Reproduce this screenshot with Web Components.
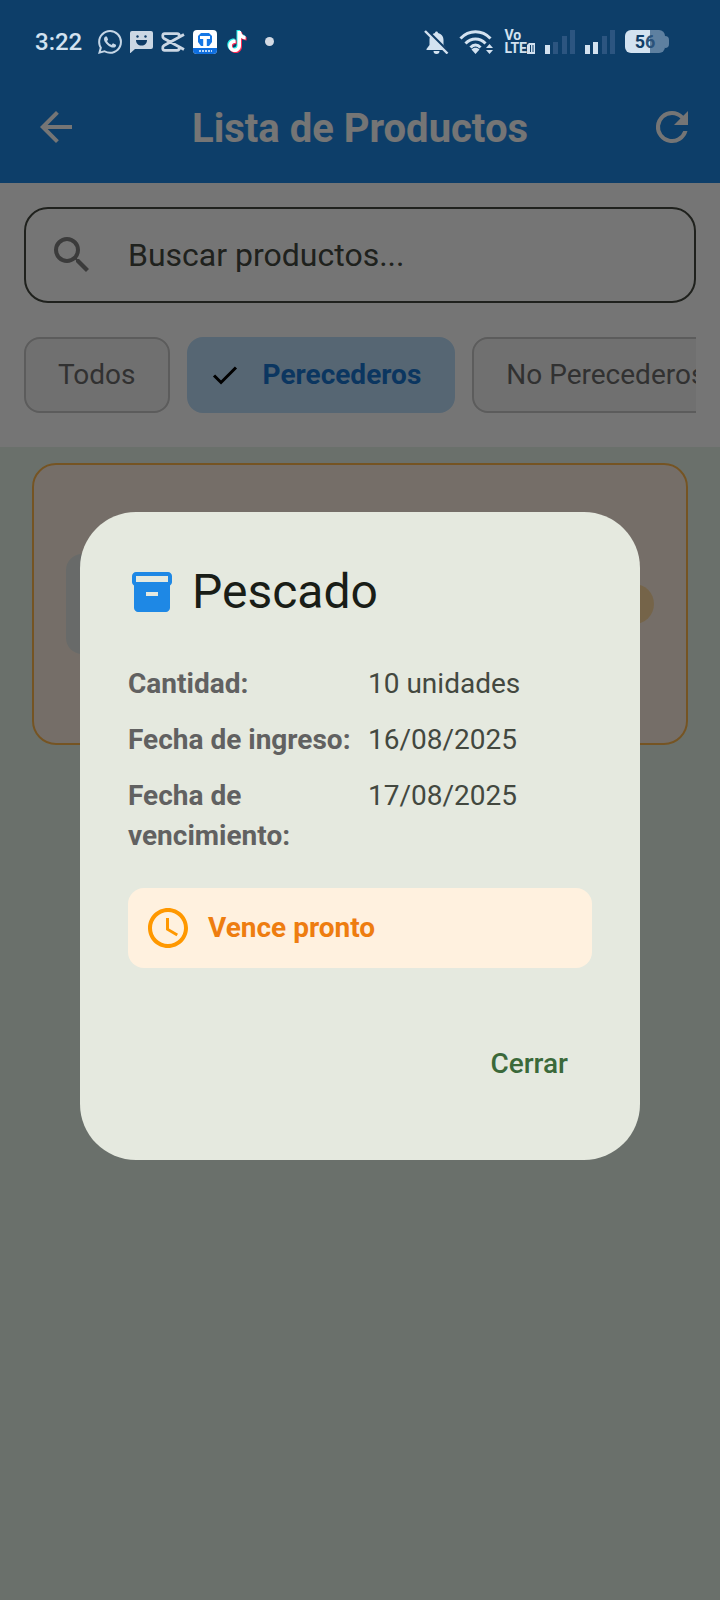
<!DOCTYPE html>
<html lang="es">
<head>
<meta charset="utf-8">
<meta name="viewport" content="width=device-width, initial-scale=1">
<title>Lista de Productos</title>
<style>
  html, body { margin: 0; height: 100%; }
  body { font-family: Roboto, "Liberation Sans", sans-serif; background: #e8f5e9; }
</style>
</head>
<body>
<app-shell>
  <product-screen slot="screen"></product-screen>
  <product-dialog slot="dialog" heading="Pescado">
    <detail-row label="Cantidad:">10 unidades</detail-row>
    <detail-row label="Fecha de ingreso:">16/08/2025</detail-row>
    <detail-row label="Fecha de vencimiento:">17/08/2025</detail-row>
    <expiry-banner slot="banner">Vence pronto</expiry-banner>
  </product-dialog>
  <status-bar slot="status"></status-bar>
</app-shell>

<script>
const define = (name, html, setup) => {
  const template = document.createElement('template');
  template.innerHTML = html;
  customElements.define(name, class extends HTMLElement {
    constructor() {
      super();
      this.attachShadow({ mode: 'open' }).append(template.content.cloneNode(true));
    }
    connectedCallback() { if (setup) setup(this, this.shadowRoot); }
  });
};

/* ---------- icons ---------- */
const ICONS = {
  back: '<path d="M20 11H7.83l5.59-5.59L12 4l-8 8 8 8 1.41-1.41L7.83 13H20v-2z"/>',
  refresh: '<path d="M17.65 6.35A7.95 7.95 0 0 0 12 4a8 8 0 1 0 7.73 10h-2.08A6 6 0 1 1 12 6c1.66 0 3.14.69 4.22 1.78L13 11h7V4l-2.35 2.35z"/>',
  search: '<path d="M15.5 14h-.79l-.28-.27A6.47 6.47 0 0 0 16 9.5 6.5 6.5 0 1 0 9.5 16c1.61 0 3.09-.59 4.23-1.57l.27.28v.79l5 4.99L20.49 19l-4.99-5zm-6 0a4.5 4.5 0 1 1 0-9 4.5 4.5 0 0 1 0 9z"/>',
  check: '<path d="M2.600 12.400l6 6L21.400 5.600" fill="none" stroke="currentColor" stroke-width="2.600"/>',
  archive: '<path fill-rule="evenodd" d="M20 2H4c-1 0-2 .9-2 2v3.01c0 .72.43 1.34 1 1.69V20c0 1.1 1.1 2 2 2h14c.9 0 2-.9 2-2V8.7c.57-.35 1-.97 1-1.69V4c0-1.100-1-2-2-2zm-5 12H9v-2h6v2zm5-7H4V4h16v3z"/>',
  clock: '<path d="M11.99 2C6.470 2 2 6.480 2 12s4.470 10 9.990 10C17.520 22 22 17.520 22 12S17.520 2 11.990 2zM12 20a8 8 0 1 1 0-16 8 8 0 0 1 0 16zm.5-13H11v6l5.250 3.150.750-1.230-4.500-2.670z"/>'
};
define('app-icon', `
  <style>
    :host { display: block; flex: none; width: 48px; height: 48px; }
    svg { display: block; width: 100%; height: 100%; fill: currentColor; }
  </style>
  <svg viewBox="0 0 24 24" aria-hidden="true"></svg>`,
  (el, root) => { root.querySelector('svg').innerHTML = ICONS[el.getAttribute('name')]; });

/* ---------- shell: screen, scrim with dialog, status bar stacked in one cell ---------- */
define('app-shell', `
  <style>
    :host { display: grid; min-height: 100%; grid-template: 1fr / minmax(0, 1fr); }
    .layer { grid-area: 1 / 1; display: grid; grid-template-columns: minmax(0, 1fr); }
    .scrim { background: rgba(0, 0, 0, .54); padding: 71px 80px 0; align-content: center; }
    .status { align-self: start; }
  </style>
  <div class="layer"><slot name="screen"></slot></div>
  <div class="layer scrim"><slot name="dialog"></slot></div>
  <div class="layer status"><slot name="status"></slot></div>`);

/* ---------- system status bar ---------- */
define('signal-bars', `
  <style>
    :host { display: block; }
    svg { display: block; fill: #d3e2f0; }
    .off { fill: #2c5580; }
  </style>
  <svg width="30" height="24" viewBox="0 0 30 24" aria-hidden="true">
    <rect x="0" y="15" width="5" height="9"/><rect x="8" y="12" width="5" height="12"/>
    <rect x="17" y="6" width="5" height="18"/><rect x="25" y="0" width="5" height="24"/>
  </svg>`,
  (el, root) => root.querySelectorAll('rect').forEach((bar, i) =>
    bar.classList.toggle('off', i >= Number(el.getAttribute('level')))));

define('status-bar', `
  <style>
    :host { display: flex; justify-content: space-between; align-items: center; height: 71px;
      padding: 12px 51px 0 35px; box-sizing: border-box; color: #d3e2f0; }
    .group { display: flex; align-items: center; gap: 8px; }
    .system { gap: 10px; }
    .time { font-size: 24px; line-height: 24px; font-weight: 500; margin-right: 8px; }
    svg { display: block; flex: none; }
    .dot { width: 9px; height: 9px; border-radius: 50%; background: #d3dae4; margin-left: 8px; }
    .volte { display: grid; grid-template-columns: auto 8px; align-items: center;
      font-size: 14px; line-height: 13px; font-weight: 700; }
    .volte span:first-child { grid-column: 1 / 3; }
    .battery { width: 40px; height: 23px; border-radius: 6px; color: #0f3c67;
      background: linear-gradient(90deg, #d3e2f0 25px, #5e80a0 25px);
      font-size: 18px; line-height: 23px; font-weight: 700; text-align: center; }
    .cell { display: flex; align-items: center; }
    .cap { width: 4px; height: 12px; border-radius: 0 6px 6px 0; background: #5e80a0; }
    .half { color: #2a527a; }
  </style>
  <div class="group">
    <span class="time">3:22</span>
    <svg width="24" height="24" viewBox="0 0 24 24" fill="#c5d6e6"><path d="M17.472 14.382c-.297-.149-1.758-.867-2.030-.967-.273-.099-.471-.148-.670.150-.197.297-.767.966-.940 1.164-.173.199-.347.223-.644.075-.297-.150-1.255-.463-2.390-1.475-.883-.788-1.480-1.761-1.653-2.059-.173-.297-.018-.458.130-.606.134-.133.298-.347.446-.520.149-.174.198-.298.298-.497.099-.198.050-.371-.025-.520-.075-.149-.669-1.612-.916-2.207-.242-.579-.487-.500-.669-.510-.173-.008-.371-.010-.570-.010-.198 0-.520.074-.792.372-.272.297-1.040 1.016-1.040 2.479 0 1.462 1.065 2.875 1.213 3.074.149.198 2.096 3.200 5.077 4.487.709.306 1.262.489 1.694.625.712.227 1.360.195 1.871.118.571-.085 1.758-.719 2.006-1.413.248-.694.248-1.289.173-1.413-.074-.124-.272-.198-.570-.347m-5.421 7.403h-.004a9.870 9.870 0 0 1-5.031-1.378l-.361-.214-3.741.982.998-3.648-.235-.374a9.860 9.860 0 0 1-1.510-5.260c.001-5.450 4.436-9.884 9.888-9.884a9.820 9.820 0 0 1 9.884 9.890c-.003 5.450-4.437 9.885-9.885 9.885m8.413-18.297A11.820 11.820 0 0 0 12.050 0C5.495 0 .160 5.335.157 11.892c0 2.096.547 4.142 1.588 5.945L.057 24l6.305-1.654a11.880 11.880 0 0 0 5.683 1.448h.005c6.554 0 11.890-5.335 11.893-11.893a11.820 11.820 0 0 0-3.480-8.413z"/></svg>
    <svg width="23" height="22" viewBox="0 0 23 22"><path fill="#cbd7e4" d="M2 0h19a2 2 0 0 1 2 2v14a2 2 0 0 1-2 2H5l-4.500 4H0V2a2 2 0 0 1 2-2z"/><g fill="#0f3c67"><circle cx="7.500" cy="5.500" r="1.200"/><circle cx="15.500" cy="5.500" r="1.200"/><path d="M6 9h11c0 3.500-2.200 5.500-5.500 5.500S6 12.500 6 9z"/></g></svg>
    <svg width="24" height="20" viewBox="0 0 24 20" fill="none" stroke="#cbd7e4" stroke-width="2.800"><path d="M23 2.500L3 13.500c-2 1.200-1.500 4.800.5 4.800h12.500c1.500 0 2.500-1 2.500-3M23 17.500L3 6.500C1 5.300 1.500 1.700 3.500 1.700H16c1.500 0 2.500 1 2.500 3"/></svg>
    <svg width="24" height="24" viewBox="0 0 24 24"><rect width="24" height="24" rx="4" fill="#fff"/><path fill="#0f6fe0" d="M0 18h24v2a4 4 0 0 1-4 4H4a4 4 0 0 1-4-4z"/><path fill="#1677e5" d="M8 3h8l3 3v6l-3 4H8l-3-4V6z"/><path fill="#fff" d="M7 6h10v3h-3.200v7h-3.600V9H7z"/><path stroke="#b8d8fa" stroke-width="2" stroke-dasharray="2 1" d="M6 21h13"/></svg>
    <svg width="24" height="24" viewBox="0 0 24 24"><defs><path id="note" d="M12.500 1h3.500c.3 2.800 1.900 4.600 4.600 4.900v3.500c-1.800 0-3.300-.5-4.600-1.400v7.400c0 4-2.900 6.600-6.300 6.600-3.700 0-6.400-2.900-6.400-6.300 0-3.900 3.300-6.700 7.300-6.200v3.600c-2-.5-3.700.7-3.700 2.600 0 1.500 1.200 2.700 2.700 2.700 1.700 0 2.900-1.200 2.900-3z"/></defs><use href="#note" x="-1" y="-1" fill="#25f4ee"/><use href="#note" x="1" y="1" fill="#fe2c55"/><use href="#note" fill="#fff"/></svg>
    <span class="dot"></span>
  </div>
  <div class="group system">
    <svg width="25" height="24" viewBox="0 0 25 24"><path fill="#d3e2f0" d="M12.500 1.500c-.9 0-1.500.6-1.500 1.500-3.500.8-5.500 3.500-5.500 7v5l-3 4v1h20v-1l-3-4v-5c0-3.500-2-6.200-5.500-7 0-.9-.6-1.500-1.500-1.500zM9.500 21a3 3 0 0 0 6 0z"/><path d="M2.500 0L25 22.500" stroke="#0f3c67" stroke-width="3"/><path d="M1 1l22.500 22.500" stroke="#d3e2f0" stroke-width="2.400"/></svg>
    <svg width="35" height="24" viewBox="0 0 35 24" fill="none" stroke="#d3e2f0" stroke-width="3"><path d="M1.500 8.500c8.500-9 21.500-9 30 0M6.500 13.500c5.700-6 14.300-6 20 0M11.500 17.500c3-3.300 7-3.300 10 0"/><path fill="#d3e2f0" stroke="none" d="M16.500 24l-4-4.500c2-2.300 6-2.300 8 0zM27 18l3.500-4 3.500 4zM27 20l3.500 4 3.500-4z"/></svg>
    <div class="volte"><span>Vo</span><span>LTE</span>
      <svg width="8" height="11" viewBox="0 0 8 11"><path fill="#d3e2f0" fill-rule="evenodd" d="M2 0h6v11H0V2zM3 2v7h1V2zM5.500 2v7h1V2z"/></svg></div>
    <signal-bars level="1"></signal-bars>
    <signal-bars level="2"></signal-bars>
    <div class="cell"><div class="battery">5<span class="half">6</span></div><div class="cap"></div></div>
  </div>`);

/* ---------- list screen ---------- */
define('app-header', `
  <style>
    :host { display: block; background: #1e88e5; padding-top: 71px; color: #fff; }
    header { display: grid; grid-template-columns: 1fr auto 1fr; align-items: center; height: 112px; padding: 0 16px 0 24px; }
    h1 { margin: 0; padding: 4px 8px 0 0; font-size: 40px; line-height: 48px; font-weight: 700; }
    button { border: 0; background: none; color: inherit; padding: 8px; margin: 0; }
    button:first-child { justify-self: start; }
    button:last-child { justify-self: end; }
  </style>
  <header>
    <button aria-label="Atrás"><app-icon name="back"></app-icon></button>
    <h1><slot></slot></h1>
    <button aria-label="Actualizar"><app-icon name="refresh"></app-icon></button>
  </header>`);

define('search-field', `
  <style>
    :host { display: block; }
    label { display: flex; align-items: center; gap: 32px; height: 96px; box-sizing: border-box;
      padding: 0 22px; border: 2px solid #44483f; border-radius: 24px; background: #fff; color: #808080; }
    input { flex: 1; min-width: 0; border: 0; outline: 0; padding: 0; background: none;
      font: 400 32px/48px Roboto, "Liberation Sans", sans-serif; color: #44483f; }
    input::placeholder { color: #44483f; opacity: 1; }
  </style>
  <label><app-icon name="search"></app-icon><input type="text" placeholder="Buscar productos..." aria-label="Buscar productos"></label>`);

define('filter-chip', `
  <style>
    :host { display: block; flex: none; }
    button { display: flex; align-items: center; gap: 24px; height: 76px; box-sizing: border-box; padding: 0 32px;
      border: 2px solid #c8c8c8; border-radius: 16px; background: #f5f5f5; color: #6c6c6c; white-space: nowrap;
      font: 400 28px/40px Roboto, "Liberation Sans", sans-serif; }
    app-icon { display: none; width: 28px; height: 28px; color: #000; }
    :host([selected]) button { border-color: #bbdefb; background: #bbdefb; color: #1976d2; font-weight: 700; padding-left: 22px; }
    :host([selected]) app-icon { display: block; }
  </style>
  <button><app-icon name="check"></app-icon><slot></slot></button>`,
  (el, root) => root.querySelector('button').setAttribute('aria-pressed', el.hasAttribute('selected')));

define('product-card', `
  <style>
    :host { display: flex; align-items: center; justify-content: space-between; min-height: 282px; box-sizing: border-box;
      padding: 32px; border: 2px solid #ffb74d; border-radius: 24px; background: #fff0e2; }
    .thumb { width: 100px; height: 100px; border-radius: 16px; background: #e3e8e4; }
    .badge { width: 140px; height: 40px; border-radius: 20px; background: #ffdaa0; }
  </style>
  <div class="thumb"></div><div class="badge"></div>`);

define('product-screen', `
  <style>
    :host { display: block; background: #e8f5e9; }
    .filters { background: #fff; padding: 24px 24px 34px; }
    .chips { display: flex; gap: 17px; margin-top: 34px; overflow: hidden; }
    main { padding: 16px 32px; }
  </style>
  <app-header>Lista de Productos</app-header>
  <div class="filters">
    <search-field></search-field>
    <div class="chips">
      <filter-chip>Todos</filter-chip>
      <filter-chip selected>Perecederos</filter-chip>
      <filter-chip>No Perecederos</filter-chip>
    </div>
  </div>
  <main><product-card></product-card></main>`);

/* ---------- product detail dialog ---------- */
define('detail-row', `
  <style>
    :host { display: grid; grid-template-columns: 240px 1fr; padding: 8px 0; font-size: 28px; line-height: 40px; color: #43483f; }
    .label { font-weight: 700; color: #616161; }
  </style>
  <span class="label"></span><span><slot></slot></span>`,
  (el, root) => { root.querySelector('.label').textContent = el.getAttribute('label'); });

define('expiry-banner', `
  <style>
    :host { display: flex; align-items: center; gap: 16px; padding: 16px; border-radius: 16px;
      background: #fff1df; color: #ee7d10; font-size: 28px; line-height: 40px; font-weight: 700; }
    app-icon { color: #ff9800; }
  </style>
  <app-icon name="clock"></app-icon><span><slot></slot></span>`);

define('product-dialog', `
  <style>
    :host { display: block; }
    section { padding: 48px; border-radius: 56px; background: #e5e9df; }
    header { display: flex; align-items: center; gap: 16px; margin-bottom: 32px; color: #1e88e5; }
    h2 { margin: 0; font-size: 48px; line-height: 64px; font-weight: 400; color: #191d17; }
    .banner { margin-top: 24px; }
    footer { display: flex; justify-content: flex-end; margin-top: 48px; }
    button { border: 0; background: none; height: 96px; padding: 0 24px; color: #3b693a;
      font: 500 28px/40px Roboto, "Liberation Sans", sans-serif; }
  </style>
  <section role="dialog" aria-modal="true" aria-labelledby="title">
    <header><app-icon name="archive"></app-icon><h2 id="title"></h2></header>
    <slot></slot>
    <div class="banner"><slot name="banner"></slot></div>
    <footer><button>Cerrar</button></footer>
  </section>`,
  (el, root) => { root.querySelector('h2').textContent = el.getAttribute('heading'); });
</script>
</body>
</html>
